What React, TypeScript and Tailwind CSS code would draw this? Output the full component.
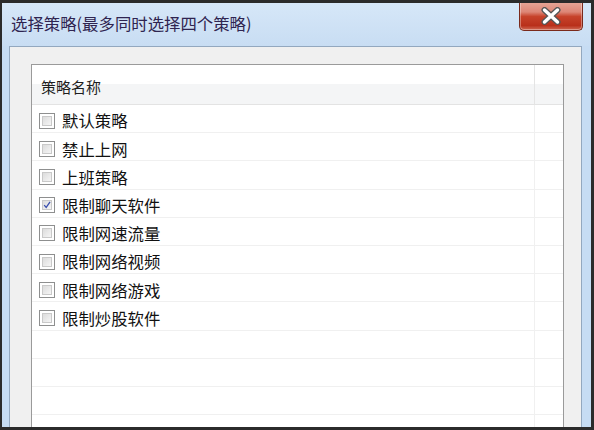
import React from 'react'

const strategies = [
  { name: '默认策略', checked: false },
  { name: '禁止上网', checked: false },
  { name: '上班策略', checked: false },
  { name: '限制聊天软件', checked: true },
  { name: '限制网速流量', checked: false },
  { name: '限制网络视频', checked: false },
  { name: '限制网络游戏', checked: false },
  { name: '限制炒股软件', checked: false },
]

const cjk = { fontFamily: '"Noto Sans CJK SC", "Noto Sans", sans-serif' }

function CheckBox({ checked }: { checked: boolean }) {
  return (
    <div className="w-[16px] h-[16px] shrink-0 border border-[#8e8f8f] bg-white p-[2px]">
      <div className="relative w-full h-full border border-[#c9c9c9] bg-[linear-gradient(135deg,#dcdcdc,#f5f5f5)]">
        {checked && (
          <svg viewBox="0 0 10 10" className="absolute inset-0 w-full h-full">
            <path d="M1.5 5.2 L4 8 L8.8 1.2" fill="none" stroke="#3a4fae" strokeWidth="1.6" />
          </svg>
        )}
      </div>
    </div>
  )
}

function CloseButton() {
  return (
    <div className="-mt-[3px] w-[64px] h-[31px] rounded-b-[5px] border border-t-0 border-[#7a2a1c] bg-[linear-gradient(#e8ad9f_0%,#dd8676_40%,#c7432b_55%,#b9301b_85%,#d06a55_100%)] flex items-center justify-center shadow-[inset_0_0_0_1px_rgba(255,255,255,0.35)]">
      <svg viewBox="0 0 22 18" className="w-[22px] h-[18px] mt-[1px]">
        <path d="M4.5 3 L17.5 15 M17.5 3 L4.5 15" stroke="#555555" strokeWidth="6" strokeLinecap="round" />
        <path d="M4.5 3 L17.5 15 M17.5 3 L4.5 15" stroke="#ffffff" strokeWidth="3.4" strokeLinecap="round" />
      </svg>
    </div>
  )
}

export default function App() {
  const emptyRows = Array.from({ length: 5 })

  return (
    <div className="w-[594px] h-[430px] overflow-hidden bg-[#2b2b2b] pt-[3px] pl-[2px] pr-[3px] pb-[3px] flex flex-col">
      <div className="flex-1 min-h-0 flex flex-col bg-[#c6dcf3] pl-[7px] pr-[9px] overflow-hidden">
        {/* Title bar */}
        <div className="h-[43px] shrink-0 flex items-start justify-between bg-[linear-gradient(#d6e7f8,#c8ddf3)] -ml-[7px] -mr-[9px] pl-[9px] pr-[8px]">
          <span className="pt-[10px] text-[16.4px] leading-[20px] text-[#2f2450]" style={cjk}>
            选择策略(最多同时选择四个策略)
          </span>
          <CloseButton />
        </div>

        {/* Client area */}
        <div className="flex-1 min-h-0 flex flex-col border-l border-t border-r border-[#93a8bf] bg-[#f0f0f0] pt-[17px] pl-[21px] pr-[17px] overflow-hidden">
          <div className="flex-1 min-h-0 flex flex-col border-l border-t border-r border-[#9a9a9a] bg-white overflow-hidden">
            {/* Header */}
            <div className="h-[40px] shrink-0 flex border-b border-[#e3e3e3] bg-[linear-gradient(#ffffff_0%,#ffffff_48%,#f4f5f6_48%,#f4f5f6_100%)]">
              <div className="w-[503px] flex items-center pl-[9px] pt-[3px] border-r border-[#e4e4e4] text-[15px] leading-none text-[#1e1e1e]" style={cjk}>
                策略名称
              </div>
              <div className="flex-1" />
            </div>

            {/* Rows */}
            {strategies.map((s) => (
              <div key={s.name} className="h-[28.2px] shrink-0 flex border-b border-[#f0f0f0]">
                <div className="w-[503px] flex items-center gap-[7px] pl-[7px] pt-[4px] border-r border-[#f0f0f0]">
                  <CheckBox checked={s.checked} />
                  <span className="text-[16.4px] leading-none text-[#111111]" style={cjk}>
                    {s.name}
                  </span>
                </div>
                <div className="flex-1" />
              </div>
            ))}
            {emptyRows.map((_, i) => (
              <div key={i} className="h-[28.2px] shrink-0 flex border-b border-[#f0f0f0]">
                <div className="w-[503px] border-r border-[#f0f0f0]" />
                <div className="flex-1" />
              </div>
            ))}
          </div>
        </div>
      </div>
    </div>
  )
}
